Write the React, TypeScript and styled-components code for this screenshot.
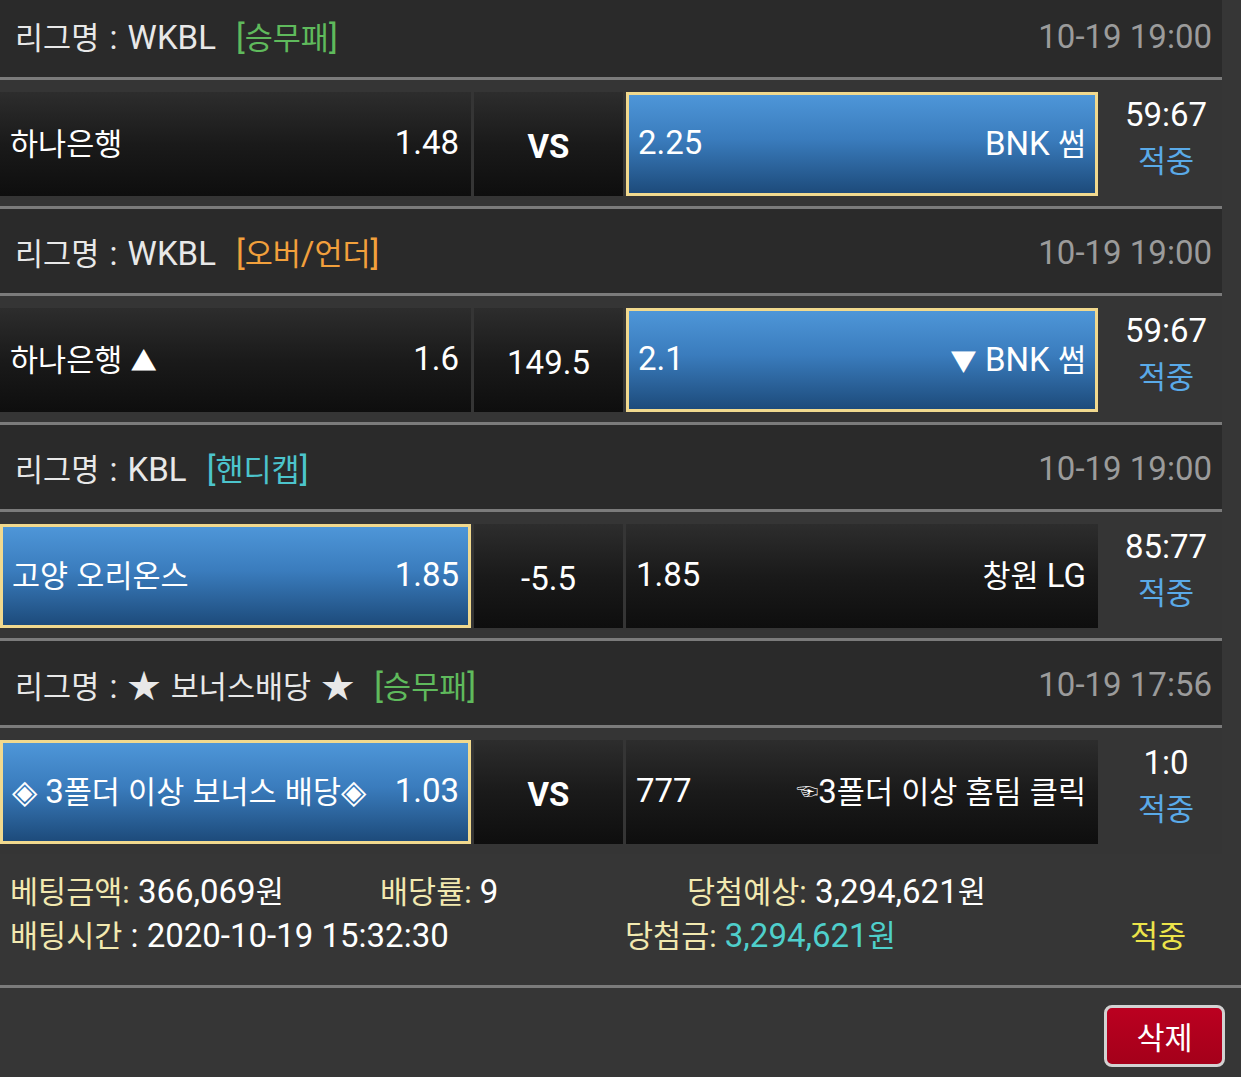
import React from "react";
import styled, { createGlobalStyle } from "styled-components";

const GlobalStyle = createGlobalStyle`
  html, body {
    margin: 0;
    padding: 0;
    background: #363636;
  }
  body {
    font-family: Roboto, "Noto Sans CJK KR", sans-serif;
    color: #fff;
    overflow: hidden;
  }
`;

// hangul runs and symbol glyphs are set a bit smaller so they sit as narrow as the reference
const RUNS = /([\u1100-\u11ff\u3130-\u318f\uac00-\ud7a3]+|[▲▼])/;

const Ko = styled.span`
  font-size: 0.925em;
`;

const Sym = styled.span`
  font-size: 0.8em;
`;

const Txt = ({ children }: { children: string }) => (
  <>
    {children.split(RUNS).map((part, i) => {
      if (i % 2 === 0) return part;
      if (part === "▲" || part === "▼") return <Sym key={i}>{part}</Sym>;
      return <Ko key={i}>{part}</Ko>;
    })}
  </>
);

type Side = { name: string; odds: string };

type Game = {
  league: string;
  tag: string;
  tagColor: string;
  date: string;
  home: Side;
  mid: string;
  away: Side;
  pick: "home" | "away";
  score: string;
  result: string;
};

const GREEN = "#5fba5c";
const ORANGE = "#f2a03c";
const TEAL = "#4cc4cc";

const games: Game[] = [
  {
    league: "WKBL",
    tag: "[승무패]",
    tagColor: GREEN,
    date: "10-19 19:00",
    home: { name: "하나은행", odds: "1.48" },
    mid: "VS",
    away: { name: "BNK 썸", odds: "2.25" },
    pick: "away",
    score: "59:67",
    result: "적중",
  },
  {
    league: "WKBL",
    tag: "[오버/언더]",
    tagColor: ORANGE,
    date: "10-19 19:00",
    home: { name: "하나은행 ▲", odds: "1.6" },
    mid: "149.5",
    away: { name: "▼ BNK 썸", odds: "2.1" },
    pick: "away",
    score: "59:67",
    result: "적중",
  },
  {
    league: "KBL",
    tag: "[핸디캡]",
    tagColor: TEAL,
    date: "10-19 19:00",
    home: { name: "고양 오리온스", odds: "1.85" },
    mid: "-5.5",
    away: { name: "창원 LG", odds: "1.85" },
    pick: "home",
    score: "85:77",
    result: "적중",
  },
  {
    league: "★ 보너스배당 ★",
    tag: "[승무패]",
    tagColor: GREEN,
    date: "10-19 17:56",
    home: { name: "◈ 3폴더 이상 보너스 배당◈", odds: "1.03" },
    mid: "VS",
    away: { name: "☜3폴더 이상 홈팀 클릭", odds: "777" },
    pick: "home",
    score: "1:0",
    result: "적중",
  },
];

const App = () => {
  return (
    <Page>
      <GlobalStyle />
      <List>
        {games.map((g, i) => (
          <GameBlock key={i}>
            <Header>
              <League>
                <Txt>{`리그명 : ${g.league}`}</Txt>
                <Tag $color={g.tagColor}>
                  <Txt>{g.tag}</Txt>
                </Tag>
              </League>
              <DateText>{g.date}</DateText>
            </Header>
            <Row>
              <Cell $picked={g.pick === "home"}>
                <span>
                  <Txt>{g.home.name}</Txt>
                </span>
                <span>{g.home.odds}</span>
              </Cell>
              <MidCell $bold={g.mid === "VS"}>{g.mid}</MidCell>
              <Cell $picked={g.pick === "away"}>
                <span>{g.away.odds}</span>
                <span>
                  {g.away.name.startsWith("☜") ? (
                    <>
                      <Hand>☜</Hand>
                      <Txt>{g.away.name.slice(1)}</Txt>
                    </>
                  ) : (
                    <Txt>{g.away.name}</Txt>
                  )}
                </span>
              </Cell>
              <ScoreCol>
                <span>{g.score}</span>
                <Result>
                  <Txt>{g.result}</Txt>
                </Result>
              </ScoreCol>
            </Row>
          </GameBlock>
        ))}
      </List>
      <Summary>
        <SumLine $cols="370px 307px auto">
          <span>
            <Label>베팅금액:</Label> <Txt>366,069원</Txt>
          </span>
          <span>
            <Label>배당률:</Label> 9
          </span>
          <span>
            <Label>당첨예상:</Label> <Txt>3,294,621원</Txt>
          </span>
        </SumLine>
        <SumLine $cols="615px 505px auto">
          <span>
            <Label>배팅시간</Label> : 2020-10-19 15:32:30
          </span>
          <span>
            <Label>당첨금:</Label>{" "}
            <Money>
              <Txt>3,294,621원</Txt>
            </Money>
          </span>
          <Hit>
            <Txt>적중</Txt>
          </Hit>
        </SumLine>
      </Summary>
      <Footer>
        <DeleteButton>
          <Txt>삭제</Txt>
        </DeleteButton>
      </Footer>
    </Page>
  );
};
export default App;

const Page = styled.div`
  width: 1241px;
  height: 1077px;
  overflow: hidden;
  background: #363636;
  font-size: 33px;
`;

const List = styled.div`
  width: 1222px;
  margin-top: -7px;
`;

const GameBlock = styled.div`
  &:last-child > div:last-child {
    border-bottom: none;
  }
`;

const Header = styled.div`
  height: 82px;
  display: flex;
  align-items: center;
  justify-content: space-between;
  padding: 2px 10px 0 15px;
  background: #2a2a2a;
  border-bottom: 3px solid #7b7b7b;
`;

const League = styled.div`
  color: #e8e8e8;
  word-spacing: 2px;
`;

const Tag = styled.span<{ $color: string }>`
  margin-left: 20px;
  color: ${(p) => p.$color};
`;

const DateText = styled.span`
  color: #9b9b9b;
`;

const Row = styled.div`
  display: grid;
  grid-template-columns: 471px 149px 472px 1fr;
  column-gap: 3px;
  height: 104px;
  padding: 12px 0 10px;
  background: #353535;
  border-bottom: 3px solid #7b7b7b;
`;

const Cell = styled.div<{ $picked?: boolean }>`
  box-sizing: border-box;
  height: 104px;
  display: flex;
  align-items: center;
  justify-content: space-between;
  white-space: nowrap;
  padding: ${(p) => (p.$picked ? "0 9px 4px" : "0 12px 4px 10px")};
  background: ${(p) =>
    p.$picked
      ? "linear-gradient(180deg, #4e96d8 0%, #3a7cbd 45%, #1d4b7b 100%)"
      : "linear-gradient(180deg, #2d2d2d 0%, #1a1a1a 50%, #0e0e0e 100%)"};
  border: ${(p) => (p.$picked ? "3px solid #f1d98e" : "none")};
`;

const MidCell = styled.div<{ $bold?: boolean }>`
  height: 104px;
  display: flex;
  align-items: center;
  justify-content: center;
  padding-top: 4px;
  box-sizing: border-box;
  font-weight: ${(p) => (p.$bold ? 700 : 400)};
  background: linear-gradient(180deg, #2d2d2d 0%, #1a1a1a 50%, #0e0e0e 100%);
`;

const Hand = styled.span`
  font-size: 22px;
  vertical-align: 4px;
`;

const ScoreCol = styled.div`
  display: flex;
  flex-direction: column;
  align-items: center;
  justify-content: center;
  padding: 0 0 16px 9px;
  line-height: 46px;
`;

const Result = styled.span`
  color: #5aaae8;
`;

const Summary = styled.div`
  padding: 14px 0 29px 10px;
  border-bottom: 3px solid #7b7b7b;
`;

const SumLine = styled.div<{ $cols: string }>`
  display: grid;
  grid-template-columns: ${(p) => p.$cols};
  align-items: center;
  height: 44px;
  white-space: nowrap;
`;

const Label = styled(Ko)`
  color: #f2e9b0;
`;

const Money = styled.span`
  color: #4fcfcb;
`;

const Hit = styled.span`
  color: #ece44a;
`;

const Footer = styled.div`
  height: 89px;
  box-sizing: border-box;
  display: flex;
  justify-content: flex-end;
  align-items: flex-start;
  padding: 17px 16px 0 0;
`;

const DeleteButton = styled.button`
  width: 121px;
  height: 62px;
  box-sizing: border-box;
  border: 3px solid #d2d2d2;
  border-radius: 8px;
  background: linear-gradient(180deg, #bb0020 0%, #a4001a 100%);
  color: #fff;
  font-family: inherit;
  font-size: 33px;
  padding: 0;
`;
